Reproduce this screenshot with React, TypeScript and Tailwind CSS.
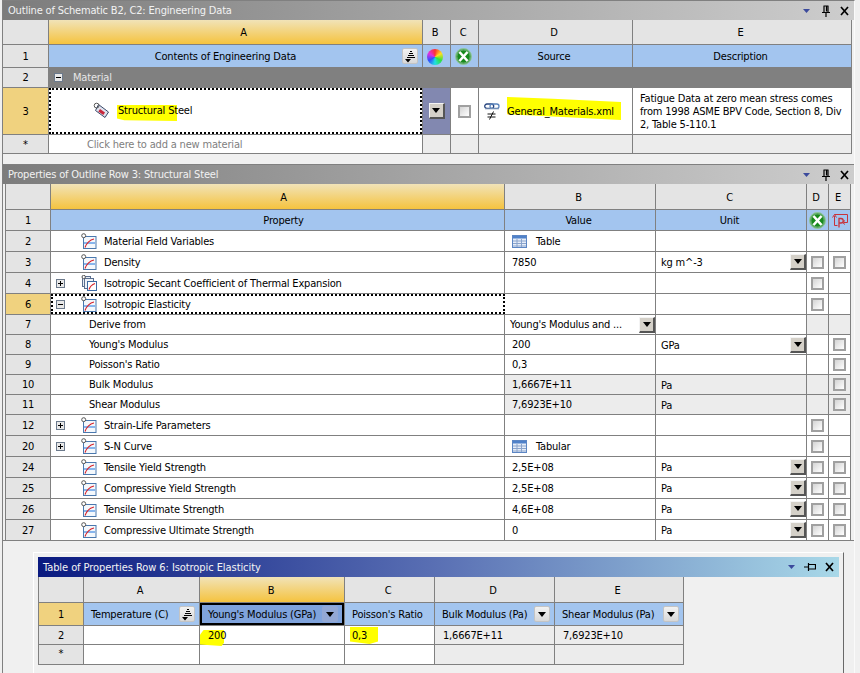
import React from 'react';

const Tri = () => (
  <svg width="9" height="6" viewBox="0 0 9 6"><path d="M1 1h7L4.5 5z" fill="#3b4a9c" /></svg>
);

const Pin = () => (
  <svg width="10" height="12" viewBox="0 0 10 12" fill="none" stroke="#000" strokeWidth="1.2">
    <path d="M2.5 1h5M3 1v6M7 1v6M5.5 1.5v5M1 7.5h8M5 8v4" />
  </svg>
);

const PinFlat = () => (
  <svg width="12" height="10" viewBox="0 0 12 10" fill="none" stroke="#000" strokeWidth="1.2">
    <path d="M0 5h4M4.5 1v8M4.5 2.5h7v4.5h-7M11.5 2v5.5" />
  </svg>
);

const Cross = () => (
  <svg width="9" height="10" viewBox="0 0 9 10" fill="none" stroke="#000" strokeWidth="1.7">
    <path d="M1 1l7 8M8 1l-7 8" />
  </svg>
);

const GreenX = () => (
  <svg width="17" height="17" viewBox="0 0 17 17">
    <circle cx="8.5" cy="8.5" r="8" fill="#5aa862" stroke="#8fc79a" />
    <circle cx="8.5" cy="8.5" r="6" fill="#178a1c" />
    <path d="M4.500 4l8 9M12.500 4l-8 9" stroke="#fff" strokeWidth="2.6" />
  </svg>
);

const Tag = () => (
  <svg width="17" height="17" viewBox="0 0 17 17">
    <path d="M5.500 2.500l10 7.500-3.500 5.500L2.500 8.500z" fill="#dfe3ee" stroke="#3c4a6a" />
    <path d="M7 7l5 3.500-1.700 2.600-5-3.500z" fill="#c8283c" />
    <circle cx="3.600" cy="3.600" r="2.400" fill="none" stroke="#555" />
  </svg>
);

const LinkIcon = () => (
  <svg width="16" height="17" viewBox="0 0 16 17" fill="none">
    <rect x="0.7" y="1" width="9" height="4.4" rx="2.2" stroke="#27457f" strokeWidth="1.3" />
    <rect x="6" y="1" width="9" height="4.4" rx="2.2" stroke="#5b85bd" strokeWidth="1.3" />
    <path d="M1 5.800h14" stroke="#7d93b5" />
    <path d="M3.500 11h8M3.500 14h8M9.500 8.500l-4 8" stroke="#111" />
  </svg>
);

const Chart = () => (
  <svg width="16" height="16" viewBox="0 0 16 16" fill="none" className="shrink-0">
    <rect x="2.500" y="3.500" width="12.500" height="12" fill="#f4f8fc" stroke="#4a78ae" />
    <circle cx="2.700" cy="2.700" r="2" fill="#fff" stroke="#555" />
    <path d="M3 10h11" stroke="#2f7fe0" strokeWidth="1.100" />
    <path d="M4 14.500c1.500-4 4-7.500 9-8.500" stroke="#d8242c" strokeWidth="1.200" />
  </svg>
);

const ChartStack = () => (
  <svg width="16" height="16" viewBox="0 0 16 16" fill="none" className="shrink-0">
    <rect x="1.500" y="1.500" width="8" height="10" fill="#e8edf4" stroke="#5a6f90" />
    <rect x="3.500" y="3.500" width="9" height="10" fill="#eef2f7" stroke="#5a6f90" />
    <rect x="6.500" y="6.500" width="9" height="9" fill="#fff" stroke="#3d6aa3" />
    <circle cx="2.700" cy="2" r="1.700" fill="#fff" stroke="#555" />
    <path d="M8 14.500c1-3 3-5 6-6" stroke="#d8242c" strokeWidth="1.200" />
  </svg>
);

const TableIcon = () => (
  <svg width="15" height="13" viewBox="0 0 15 13" fill="none" className="shrink-0">
    <rect x="0.5" y="0.5" width="14" height="12" fill="#e6edf8" stroke="#5c86c4" />
    <rect x="1" y="1" width="13" height="2.500" fill="#4f81c9" />
    <path d="M1 6h13M1 8.500h13M1 11h13M5 4v8M9.500 4v8" stroke="#8aa4cc" />
  </svg>
);

const PArrows = () => (
  <svg width="16" height="15" viewBox="0 0 16 15" fill="none" stroke="#c8323a" strokeWidth="1">
    <path d="M2.500 3v9.500h3" />
    <path d="M0.500 4.500l2-3 2 3" />
    <path d="M2.500 1.500h13v8h-4" />
    <path d="M13 7.500l-2.500 2 2.500 2" />
    <path d="M7 14.500V5.500h2a1.800 1.800 0 010 4.500H7" strokeWidth="1.300" />
  </svg>
);

const Check = () => (
  <div className="w-[13px] h-[13px] border-2 border-[#a0a0a0] bg-[linear-gradient(135deg,#d4d4d4,#ffffff)]" />
);

const Drop = () => (
  <div className="w-[16px] h-[16px] flex items-center justify-center bg-[#d4d0c8] border-t border-l border-t-[#f4f4f4] border-l-[#f4f4f4] border-r-2 border-b-2 border-r-[#555555] border-b-[#555555]">
    <svg width="8" height="5" viewBox="0 0 8 5"><path d="M0 0h8L4 5z" fill="#000" /></svg>
  </div>
);

const HeadDrop = () => (
  <div className="w-[16px] h-[16px] shrink-0 rounded-[2px] flex items-center justify-center bg-[linear-gradient(#f2f2f2,#d8d8d8)] border border-[#c4c4c4]">
    <svg width="8" height="5" viewBox="0 0 8 5"><path d="M0 0h8L4 5z" fill="#000" /></svg>
  </div>
);

const SortBtn = () => (
  <div className="w-[16px] h-[16px] shrink-0 rounded-[2px] flex items-center justify-center bg-[linear-gradient(#f2f2f2,#d8d8d8)] border border-[#c4c4c4]">
    <svg width="12" height="13" viewBox="0 0 12 13" fill="none" stroke="#000">
      <path d="M6 1.500h2M5 3.500h4M4 5.500h6M3 7.500h8" />
      <path d="M1 9h6L4 12.500z" fill="#000" stroke="none" />
    </svg>
  </div>
);

const Tree = ({ open }: { open?: boolean }) => (
  <div className="w-[9px] h-[9px] border border-[#6c7a8c] bg-[#e8e8e8] relative flex items-center justify-center shrink-0">
    <div className="w-[5px] h-px bg-black" />
    {!open && <div className="absolute w-px h-[5px] bg-black" />}
  </div>
);

const Marker = ({ className }: { className: string }) => (
  <div className={`absolute bg-[#ffff00] ${className}`} />
);

const hd = 'bg-[#e4e4e4] flex items-center justify-center pr-[3px] pt-[1px]';
const hdSel = 'bg-[linear-gradient(#f1e3b8,#f5c33f)] flex items-center justify-center pt-[1px]';
const blue = 'bg-[#a3c5ef] flex items-center justify-center pr-[3px] pt-[1px]';
const num = 'bg-[#e4e4e4] flex items-center justify-center';
const numSel = 'bg-[#f0d27f] flex items-center justify-center';
const cell = 'bg-white flex items-center';
const gray = 'bg-[#ececec] flex items-center';
const center = 'bg-white flex items-center justify-center';
const centerGray = 'bg-[#ececec] flex items-center justify-center';

const Title = ({ text }: { text: string }) => (
  <div className="h-[19px] flex items-center pl-[5px] bg-[linear-gradient(90deg,#7c7c7c,#cdcdcd)] text-[#f2f2f2]">
    <span>{text}</span>
    <div className="ml-auto flex items-center">
      <Tri />
      <div className="ml-[10px]"><Pin /></div>
      <div className="ml-[9px] mr-[5px]"><Cross /></div>
    </div>
  </div>
);

type Row = {
  n: string;
  name: string;
  tree?: 'plus' | 'minus';
  icon?: 'chart' | 'stack';
  value?: string;
  valueIcon?: boolean;
  unit?: string;
  unitDrop?: boolean;
  d?: 'check' | 'gray';
  e?: 'check' | 'gray';
  shaded?: boolean;
  selected?: boolean;
};

const rows: Row[] = [
  { n: '2', name: 'Material Field Variables', icon: 'chart', value: 'Table', valueIcon: true },
  { n: '3', name: 'Density', icon: 'chart', value: '7850', unit: 'kg m^-3', unitDrop: true, d: 'check', e: 'check' },
  { n: '4', name: 'Isotropic Secant Coefficient of Thermal Expansion', tree: 'plus', icon: 'stack', d: 'check' },
  { n: '6', name: 'Isotropic Elasticity', tree: 'minus', icon: 'chart', d: 'check', selected: true },
  { n: '7', name: 'Derive from', d: 'gray', e: 'gray' },
  { n: '8', name: "Young's Modulus", value: '200', unit: 'GPa', unitDrop: true, e: 'check' },
  { n: '9', name: "Poisson's Ratio", value: '0,3', e: 'check' },
  { n: '10', name: 'Bulk Modulus', value: '1,6667E+11', unit: 'Pa', d: 'gray', e: 'check', shaded: true },
  { n: '11', name: 'Shear Modulus', value: '7,6923E+10', unit: 'Pa', d: 'gray', e: 'check', shaded: true },
  { n: '12', name: 'Strain-Life Parameters', tree: 'plus', icon: 'chart', d: 'check' },
  { n: '20', name: 'S-N Curve', tree: 'plus', icon: 'chart', value: 'Tabular', valueIcon: true, d: 'check' },
  { n: '24', name: 'Tensile Yield Strength', icon: 'chart', value: '2,5E+08', unit: 'Pa', unitDrop: true, d: 'check', e: 'check' },
  { n: '25', name: 'Compressive Yield Strength', icon: 'chart', value: '2,5E+08', unit: 'Pa', unitDrop: true, d: 'check', e: 'check' },
  { n: '26', name: 'Tensile Ultimate Strength', icon: 'chart', value: '4,6E+08', unit: 'Pa', unitDrop: true, d: 'check', e: 'check' },
  { n: '27', name: 'Compressive Ultimate Strength', icon: 'chart', value: '0', unit: 'Pa', unitDrop: true, d: 'check', e: 'check' },
];

const FlagCell = ({ v }: { v?: 'check' | 'gray' }) => {
  if (v === 'gray') return <div className={centerGray} />;
  return <div className={center}>{v === 'check' && <Check />}</div>;
};

const PropertyRow = ({ r }: { r: Row }) => {
  const derive = r.n === '7';
  return (
    <>
      <div className={r.selected ? numSel : num}>{r.n}</div>
      <div className={`${cell} ${r.selected ? 'border-2 border-dotted border-black -mr-px z-10' : ''}`}>
        {r.icon ? (
          <>
            <div className={`${r.selected ? 'w-[3px]' : 'w-[5px]'} shrink-0`} />
            <div className="w-[25px] shrink-0">{r.tree && <Tree open={r.tree === 'minus'} />}</div>
            {r.icon === 'chart' ? <Chart /> : <ChartStack />}
            <span className="ml-[7px]">{r.name}</span>
          </>
        ) : (
          <span className="ml-[38px]">{r.name}</span>
        )}
      </div>
      <div className={`${r.shaded ? gray : cell} ${derive ? 'justify-between pl-[5px]' : 'pl-[7px]'} ${r.valueIcon ? 'pl-[4px]' : ''}`}>
        {r.valueIcon && <div className="mr-[9px]"><TableIcon /></div>}
        <span>{derive ? "Young's Modulus and ..." : r.value}</span>
        {derive && <Drop />}
      </div>
      <div className={`${r.shaded ? gray : cell} pl-[5px] justify-between`}>
        <span className="pt-[1px]">{r.unit}</span>
        {r.unitDrop && <Drop />}
      </div>
      <FlagCell v={r.d} />
      <div className={r.e === 'gray' || r.shaded ? centerGray : center}>{r.e === 'check' && <Check />}</div>
    </>
  );
};

export default function App() {
  return (
    <div className="w-[860px] h-[673px] overflow-hidden bg-[#f0f0f0] text-black text-[11px] tracking-[-0.18px] leading-none font-['DejaVu_Sans_Condensed','DejaVu_Sans',sans-serif]">
      <div className="ml-[2px] w-[853px] h-[673px] border-l border-t border-r border-l-[#808080] border-t-[#808080] border-r-[#fafafa]">
        {/* Outline */}
        <Title text="Outline of Schematic B2, C2: Engineering Data" />
        <div className="w-fit grid grid-cols-[45px_373px_27px_27px_153px_218px] grid-rows-[24px_22px_19px_46px_18px] gap-px bg-[#808080] border-r border-b border-[#808080]">
          <div className={hd} />
          <div className={`${hdSel} pl-[16px]`}>A</div>
          <div className={hd}>B</div>
          <div className={hd}>C</div>
          <div className={hd}>D</div>
          <div className={hd}>E</div>

          <div className={num}>1</div>
          <div className="bg-[#a3c5ef] flex items-center justify-center pr-[20px] pt-[1px] relative">
            Contents of Engineering Data
            <div className="absolute right-[4px] top-[3px]"><SortBtn /></div>
          </div>
          <div className={blue}>
            <div className="w-[16px] h-[16px] rounded-full bg-[conic-gradient(#ff3030,#ffe020,#30e040,#20e0e0,#3050ff,#e030e0,#ff3030)]" />
          </div>
          <div className={blue}><GreenX /></div>
          <div className={blue}>Source</div>
          <div className={blue}>Description</div>

          <div className={num}>2</div>
          <div className="col-span-5 bg-[#808080] text-[#e6e6e6] flex items-center pl-[5px]">
            <Tree open />
            <span className="ml-[10px]">Material</span>
          </div>

          <div className={numSel}>3</div>
          <div className={`${cell} border-2 border-dotted border-black pl-[42px] pb-[2px] relative`}>
            <Marker className="left-[66px] top-[15px] w-[60px] h-[16px] [clip-path:polygon(0_0,100%_0,100%_100%,12%_95%,0_85%)]" />
            <Tag />
            <span className="ml-[8px] relative">Structural Steel</span>
          </div>
          <div className="bg-[#8288b0] flex items-center justify-center"><Drop /></div>
          <div className={center}><Check /></div>
          <div className={`${cell} pl-[5px] relative`}>
            <Marker className="left-[28px] top-[9px] w-[114px] h-[23px] [clip-path:polygon(0_0,40%_8%,100%_22%,100%_100%,40%_85%,0_75%)]" />
            <LinkIcon />
            <span className="ml-[7px] relative">General_Materials.xml</span>
          </div>
          <div className="bg-white pl-[7px] flex items-center leading-[13px]">
            <span>
              Fatigue Data at zero mean stress comes
              <br />
              from 1998 ASME BPV Code, Section 8, Div
              <br />
              2, Table 5-110.1
            </span>
          </div>

          <div className={num}>*</div>
          <div className={`${cell} pl-[38px] text-[#808080]`}>Click here to add a new material</div>
          <div className={gray} />
          <div className={gray} />
          <div className={gray} />
          <div className={gray} />
        </div>

        {/* Properties */}
        <div className="mt-[10px] border-t border-b border-[#808080]">
          <Title text="Properties of Outline Row 3: Structural Steel" />
          <div className="ml-[2px] w-fit grid grid-cols-[44px_453px_150px_150px_21px_21px] grid-rows-[25px_repeat(5,20px)_repeat(5,19px)_repeat(6,20px)] gap-px bg-[#808080] border-l border-r border-[#808080]">
            <div className={hd} />
            <div className={`${hdSel} pl-[12px]`}>A</div>
            <div className={hd}>B</div>
            <div className={hd}>C</div>
            <div className={hd}>D</div>
            <div className={hd}>E</div>

            <div className={num}>1</div>
            <div className="bg-[#a3c5ef] flex items-center justify-center pl-[12px] pt-[1px]">Property</div>
            <div className={blue}>Value</div>
            <div className={blue}>Unit</div>
            <div className="bg-[#a3c5ef] flex items-center justify-center"><GreenX /></div>
            <div className="bg-[#a3c5ef] flex items-center justify-center"><PArrows /></div>

            {rows.map((r) => (
              <PropertyRow key={r.n} r={r} />
            ))}
          </div>
        </div>

        {/* Table of properties */}
        <div className="mt-[11px] ml-[30px] w-[811px] h-[140px] border-l border-t border-r border-l-white border-t-white border-r-[#696969] pl-[4px] pt-[4px]">
          <div className="w-[801px] h-[20px] flex items-center pl-[5px] bg-[linear-gradient(90deg,#0a1a80,#5a70b4_50%,#a8d8e8)] text-[#f4f4f4]">
            <span className="tracking-[-0.07px]">Table of Properties Row 6: Isotropic Elasticity</span>
            <div className="ml-auto flex items-center">
              <Tri />
              <div className="ml-[8px]"><PinFlat /></div>
              <div className="ml-[9px] mr-[5px]"><Cross /></div>
            </div>
          </div>
          <div className="w-fit grid grid-cols-[44px_115px_144px_89px_119px_128px] grid-rows-[25px_22px_18px_19px] gap-px bg-[#808080] border-l border-r border-b border-[#808080]">
            <div className={hd} />
            <div className={hd}>A</div>
            <div className={`${hdSel} pr-[2px]`}>B</div>
            <div className={hd}>C</div>
            <div className={hd}>D</div>
            <div className={hd}>E</div>

            <div className={numSel}>1</div>
            <div className="bg-[#a3c5ef] flex items-center justify-between pl-[7px] pr-[4px]">
              <span>Temperature (C)</span>
              <SortBtn />
            </div>
            <div className="bg-[#7fa3dc] border-2 border-black flex items-center justify-between pl-[6px] pr-[4px]">
              <span>Young's Modulus (GPa)</span>
              <div className="w-[16px] h-[16px] rounded-[2px] bg-[#93a8d4] flex items-center justify-center">
                <svg width="8" height="5" viewBox="0 0 8 5"><path d="M0 0h8L4 5z" fill="#000" /></svg>
              </div>
            </div>
            <div className="bg-[#a3c5ef] flex items-center pl-[7px]">Poisson's Ratio</div>
            <div className="bg-[#a3c5ef] flex items-center justify-between pl-[7px] pr-[4px]">
              <span>Bulk Modulus (Pa)</span>
              <HeadDrop />
            </div>
            <div className="bg-[#a3c5ef] flex items-center justify-between pl-[7px] pr-[4px]">
              <span>Shear Modulus (Pa)</span>
              <HeadDrop />
            </div>

            <div className={num}>2</div>
            <div className={cell} />
            <div className={`${cell} pl-[8px] relative`}>
              <Marker className="left-0 top-[4px] w-[24px] h-[16px] [clip-path:polygon(15%_0,100%_0,100%_80%,90%_100%,0_90%,0_30%)]" />
              <span className="relative">200</span>
            </div>
            <div className={`${cell} pl-[7px] relative`}>
              <Marker className="left-[5px] top-[1px] w-[28px] h-[17px] [clip-path:polygon(0_0,100%_0,100%_85%,70%_100%,0_85%)]" />
              <span className="relative">0,3</span>
            </div>
            <div className={`${gray} pl-[8px]`}>1,6667E+11</div>
            <div className={`${gray} pl-[8px]`}>7,6923E+10</div>

            <div className={`${num} pb-[3px]`}>*</div>
            <div className={cell} />
            <div className={cell} />
            <div className={cell} />
            <div className={gray} />
            <div className={gray} />
          </div>
        </div>
      </div>
    </div>
  );
}
